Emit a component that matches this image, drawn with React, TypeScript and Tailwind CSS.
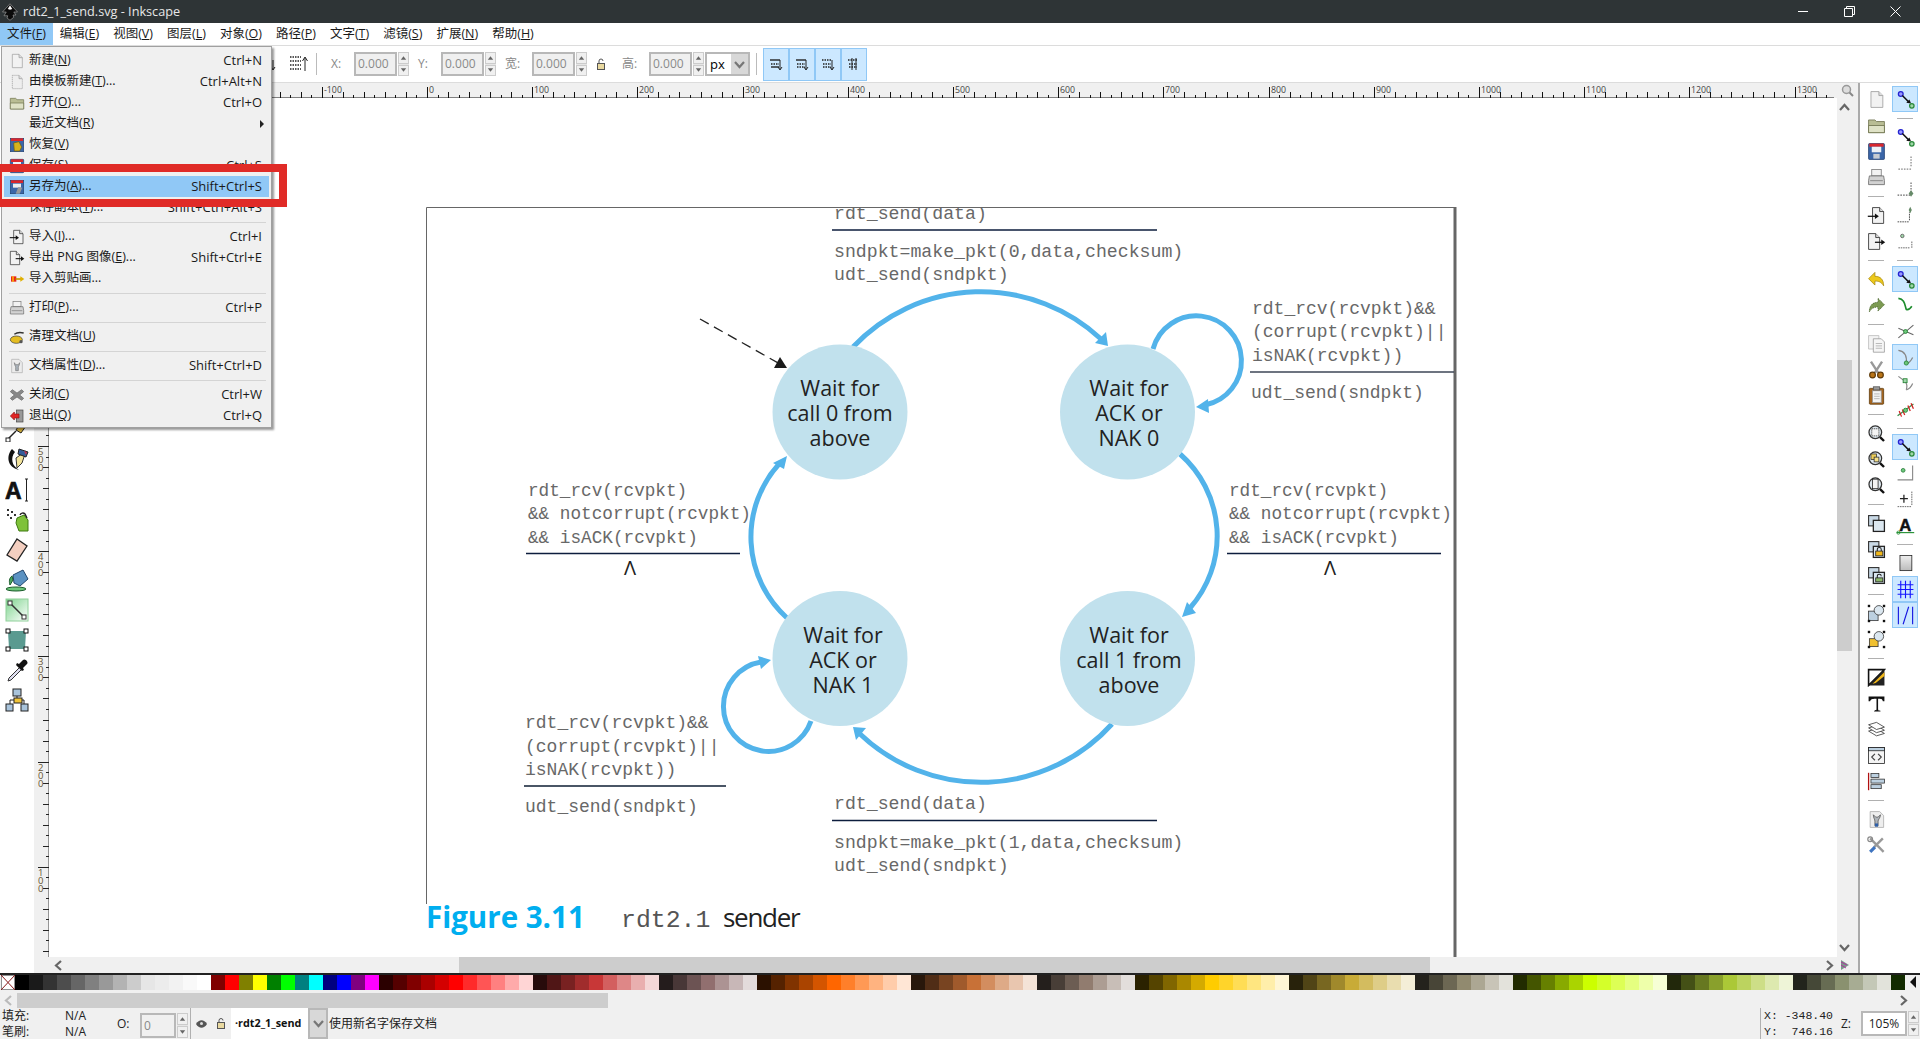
import React from "react";

const PALETTE = "#000000 #1a1a1a #333333 #4d4d4d #666666 #808080 #999999 #b3b3b3 #cccccc #e6e6e6 #ececec #f2f2f2 #f9f9f9 #ffffff #800000 #ff0000 #808000 #ffff00 #008000 #00ff00 #008080 #00ffff #000080 #0000ff #800080 #ff00ff #2b0000 #550000 #800000 #aa0000 #d40000 #ff0000 #ff2a2a #ff5555 #ff8080 #ffaaaa #ffd5d5 #280b0b #501616 #782121 #a02c2c #c83737 #d35f5f #de8787 #e9afaf #f4d7d7 #241c1c #483737 #6c5353 #916f6f #ac9393 #c8b7b7 #e3dbdb #2b1100 #552200 #803300 #aa4400 #d45500 #ff6600 #ff7f2a #ff9955 #ffb380 #ffccaa #ffe6d5 #28170b #502d16 #784421 #a05a2c #c87137 #d38d5f #deaa87 #e9c6af #f4e3d7 #241f1c #483e37 #6c5d53 #917c6f #ac9d93 #c8beb7 #e3dedb #2b2200 #554400 #806600 #aa8800 #d4aa00 #ffcc00 #ffd42a #ffdd55 #ffe680 #ffeeaa #fff6d5 #28220b #504416 #786721 #a0892c #c8ab37 #d3bc5f #decd87 #e9ddaf #f4eed7 #24221c #484537 #6c6753 #918a6f #aca793 #c8c4b7 #e3e2db #222b00 #445500 #668000 #88aa00 #aad400 #ccff00 #d4ff2a #ddff55 #e5ff80 #eeffaa #f6ffd5 #22280b #445016 #677821 #89a02c #abc837 #bcd35f #cdde87 #dde9af #eef4d7 #22241c #454837 #676c53 #8a916f #a7ac93 #c4c8b7 #e2e3db #122b00".split(" ");

const mag = (inner: React.ReactNode) => (
  <>
    <circle cx="10.5" cy="10.5" r="8" fill="#dfe8ef" stroke="#333" strokeWidth="1.6" />
    {inner}
    <path d="M16.5 16.5l5 5" stroke="#111" strokeWidth="3" />
  </>
);
const nodes = (
  <>
    <circle cx="6" cy="5" r="3" fill="#9a9aff" stroke="#2323d0" strokeWidth="1.6" />
    <path d="M8 7l8 8" stroke="#111" strokeWidth="1.8" />
    <path d="M19 17l-6-1 4-4z" fill="#111" />
    <circle cx="20" cy="20" r="2.8" fill="#9fd6a8" stroke="#2a8a3a" strokeWidth="1.6" />
  </>
);
const stack = (inner: React.ReactNode) => (
  <>
    <rect x="2" y="2" width="13" height="13" fill="#c9d9e6" stroke="#333" strokeWidth="1.4" />
    <rect x="8" y="8" width="14" height="14" fill="#dbe7f0" stroke="#222" strokeWidth="1.6" />
    {inner}
  </>
);

const ICONS: Record<string, React.ReactNode> = {
  page: (<><path d="M5 2h10l5 5v15H5z" fill="#f2f2f2" stroke="#999" /><path d="M15 2v5h5" fill="#ddd" stroke="#999" /></>),
  template: (<><path d="M5 2h10l5 5v15H5z" fill="#eee" stroke="#999" strokeDasharray="2 1" /><path d="M15 2v5h5" fill="#ddd" stroke="#999" /></>),
  open: (<><path d="M2 5h8l2 2h10v14H2z" fill="#b9bd94" stroke="#6b6f4a" /><path d="M2 12h20v9H2z" fill="#dfe2c6" stroke="#6b6f4a" /></>),
  save: (<><rect x="2" y="2" width="20" height="20" rx="1" fill="#3b66a8" stroke="#223f70" /><rect x="3" y="2" width="18" height="4" fill="#d9262c" /><rect x="6" y="6" width="12" height="7" fill="#eef2f6" /><rect x="8" y="15" width="8" height="6" fill="#c7ccd2" /></>),
  saveas: (<><rect x="2" y="2" width="20" height="20" fill="#3b66a8" stroke="#223f70" /><rect x="3" y="2" width="18" height="4" fill="#d9262c" /><rect x="6" y="7" width="12" height="6" fill="#eee" /><path d="M10 22l4-10 6 1-4 9z" fill="#999" /></>),
  recover: (<><rect x="2" y="2" width="20" height="20" fill="#3b66a8" stroke="#223f70" /><rect x="3" y="2" width="18" height="4" fill="#d9262c" /><path d="M7 9l8-2 4 8-3 6H8z" fill="#d6b21c" stroke="#6a5a10" /></>),
  print: (<><rect x="6" y="2" width="12" height="8" fill="#f2f2f2" stroke="#777" /><path d="M3 10h18l1 6v5H2v-5z" fill="#d2d2d2" stroke="#666" /><path d="M4 16h16" stroke="#777" /></>),
  importI: (<><path d="M7 2h9l5 5v15H7z" fill="#f2f2f2" stroke="#222" /><path d="M16 2v5h5" fill="#ddd" stroke="#222" /><path d="M1 13h11" stroke="#111" strokeWidth="1.6" /><path d="M15 13l-5-3.5v7z" fill="#111" /></>),
  exportI: (<><path d="M2 2h9l5 5v15H2z" fill="#f2f2f2" stroke="#222" /><path d="M11 2v5h5" fill="#ddd" stroke="#222" /><path d="M10 13h9" stroke="#111" strokeWidth="1.6" /><path d="M23 13l-5-3.5v7z" fill="#111" /></>),
  clip: (<><path d="M3 8h8v8H3z" fill="#e9241c" /><path d="M6 8v8" stroke="#ffd000" strokeWidth="2" /><path d="M10 12h9" stroke="#c79a00" strokeWidth="2.5" /><path d="M23 12l-6-4v8z" fill="#e0b000" /></>),
  vacuum: (<><ellipse cx="11" cy="16" rx="9" ry="5.5" fill="#e5bd21" stroke="#333" /><path d="M8 8c5-4 10-3 14-2" stroke="#333" strokeWidth="2" fill="none" /><circle cx="18" cy="19" r="2.5" fill="#555" /></>),
  docprop: (<><path d="M4 2h11l5 5v15H4z" fill="#ececec" stroke="#aaa" /><path d="M8 7c0 4 2 5 2 7v5h4v-5c0-2 2-3 2-7l-2 3h-4z" fill="#a9b2ba" stroke="#777" /></>),
  close: (<path d="M5 4l7 5 7-5 3 3-6 5 6 5-3 3-7-5-7 5-3-3 6-5-6-5z" fill="#888" stroke="#666" />),
  quit: (<><rect x="11" y="3" width="10" height="18" fill="#999" stroke="#444" /><path d="M2 12l6-6v3h7v6H8v3z" fill="#e02424" stroke="#901010" /></>),
  undo: (<path d="M10 3L2 11l8 8v-5c5 0 8 1 11 6 0-8-4-12-11-12z" fill="#edc91b" stroke="#a98a10" />),
  redo: (<path d="M14 3l8 8-8 8v-5c-5 0-8 1-11 6 0-8 4-12 11-12z" fill="#7c9a52" stroke="#3e5b22" strokeDasharray="1.5 1" />),
  copy: (<><path d="M2 2h13v17H2z" fill="#f3f3f3" stroke="#bbb" /><path d="M8 6h10l4 4v13H8z" fill="#f6f6f6" stroke="#999" /><path d="M11 12h8M11 15h8M11 18h8" stroke="#aaa" /></>),
  cut: (<><path d="M5 2l9 14M19 2L10 16" stroke="#999" strokeWidth="3" /><circle cx="7" cy="19" r="3.6" fill="#b97417" stroke="#5e3a0a" strokeWidth="1.5" /><circle cx="17" cy="19" r="3.6" fill="#b97417" stroke="#5e3a0a" strokeWidth="1.5" /></>),
  paste: (<><rect x="3" y="3" width="18" height="20" rx="1" fill="#a5651f" stroke="#5e3a0a" /><rect x="7" y="6" width="11" height="15" fill="#f4f4f4" stroke="#999" /><rect x="8" y="1" width="8" height="4" fill="#999" stroke="#555" /><path d="M9 10h7M9 13h7M9 16h7" stroke="#aaa" /></>),
  zoomsel: mag(<rect x="6" y="6" width="9" height="9" fill="#f4f4f4" stroke="#222" strokeDasharray="1.5 1" />),
  zoomdraw: mag(<><rect x="5" y="5" width="7" height="7" fill="#eccd57" stroke="#333" /><rect x="9" y="9" width="6" height="6" fill="#f5e08a" stroke="#333" /></>),
  zoompage: mag(<rect x="7" y="4" width="7" height="12" fill="#f4f4f4" stroke="#222" />),
  dup: stack(null),
  clone: stack(<><rect x="11" y="14" width="9" height="6" fill="#f0b71a" stroke="#222" /><path d="M13 14v-2a2.5 2.5 0 015 0v2" fill="none" stroke="#222" strokeWidth="1.3" /></>),
  unlink: stack(<><rect x="11" y="15" width="9" height="5" fill="#8db86a" stroke="#222" /><path d="M13 15v-2a2.5 2.5 0 015 0" fill="none" stroke="#222" strokeWidth="1.3" /></>),
  group: (<><rect x="2" y="9" width="12" height="12" fill="#bcd0e0" stroke="#333" /><circle cx="15" cy="8" r="6" fill="#dbe7f0" stroke="#333" /><g fill="#111"><rect x="1" y="1" width="3" height="3" /><rect x="20" y="1" width="3" height="3" /><rect x="1" y="20" width="3" height="3" /><rect x="20" y="20" width="3" height="3" /></g></>),
  ungroup: (<><rect x="3" y="11" width="11" height="10" fill="#f0c030" stroke="#333" /><circle cx="15" cy="8" r="6" fill="#dbe7f0" stroke="#333" /><g fill="#111"><rect x="1" y="1" width="3" height="3" /><rect x="20" y="1" width="3" height="3" /><rect x="1" y="20" width="3" height="3" /><rect x="20" y="20" width="3" height="3" /></g></>),
  fill: (<><path d="M2 2h20L2 22z" fill="#fff" stroke="#111" strokeWidth="2" /><path d="M22 2v20H2z" fill="#222" /><path d="M22 5L10 17l-3 3 4-1 11-9z" fill="#f0b71a" /></>),
  textT: (<path d="M2 3h20v6h-2c-1-3-2-3-6-3v13c0 2 1 2 3 2v1H9v-1c2 0 3 0 3-2V6C8 6 5 6 4 9H2z" fill="#111" />),
  layers: (<><path d="M2 14l10 6 10-3-10-6z" fill="#fff" stroke="#333" /><path d="M2 10l10 6 10-3-10-6z" fill="#fff" stroke="#333" /><path d="M2 6l10 6 10-3-10-6z" fill="#fff" stroke="#333" /></>),
  xml: (<><rect x="2" y="2" width="20" height="20" fill="#f4f4f4" stroke="#222" /><rect x="2" y="2" width="20" height="4" fill="#bcd0e0" stroke="#222" /><path d="M10 10l-4 4 4 4M14 10l4 4-4 4" stroke="#444" fill="none" strokeWidth="1.5" /></>),
  align: (<><path d="M2 1v22" stroke="#b01010" strokeWidth="1.6" /><rect x="5" y="2" width="10" height="5" fill="#bcd0e0" stroke="#333" /><rect x="5" y="9" width="17" height="5" fill="#bcd0e0" stroke="#333" /><rect x="5" y="16" width="13" height="5" fill="#bcd0e0" stroke="#333" /></>),
  docfile: (<><path d="M4 2h12l5 5v15H4z" fill="#eee" stroke="#aaa" /><path d="M8 6c0 4 2 6 2 8v6h4v-6c0-2 3-4 3-8l-3 3h-3z" fill="#aeb4ba" stroke="#555" /><rect x="10" y="17" width="4" height="4" fill="#2e5fa8" /></>),
  prefs: (<><path d="M4 3l17 17" stroke="#999" strokeWidth="3" /><path d="M20 3L9 14" stroke="#999" strokeWidth="3" /><path d="M10 14l-6 6" stroke="#3e74c0" strokeWidth="4" /><circle cx="4" cy="4" r="3" fill="none" stroke="#888" strokeWidth="1.5" /></>),
  snapDots: (<path d="M3 19h16M19 3v14" stroke="#888" strokeWidth="1.6" strokeDasharray="2 1.5" fill="none" />),
  snapDia: (<><path d="M2 19h16M19 3v13" stroke="#666" strokeWidth="1.5" strokeDasharray="2 1.5" fill="none" /><path d="M19 13l3 4-3 4-3-4z" fill="#668a68" /></>),
  snapDia2: (<><path d="M2 20h15" stroke="#222" strokeDasharray="2 1" fill="none" /><path d="M17 18V8" stroke="#222" strokeDasharray="2 1" /><path d="M18 1l2 4-2 4-2-4z" fill="#668a68" /></>),
  snapBox: (<><circle cx="8" cy="5" r="2.2" fill="#9fd6a8" stroke="#555" /><path d="M3 20h14M20 12v8" stroke="#444" strokeDasharray="2 1" /></>),
  snapCurve: (<><path d="M3 3c8 1 8 8 10 14 3 1 5-1 7-4" stroke="#1c8c2c" strokeWidth="2" fill="none" /></>),
  snapCross: (<><path d="M3 20L22 4" stroke="#666" strokeWidth="1.4" /><path d="M3 8l19 8" stroke="#666" strokeWidth="1.4" /><circle cx="12" cy="12" r="2.5" fill="#6cc77a" stroke="#1c7c2c" /></>),
  snapCusp: (<><path d="M3 3c8 1 11 8 10 17" stroke="#888" strokeWidth="1.6" fill="none" /><path d="M13 20c4-1 6-4 8-8" stroke="#888" strokeWidth="1.6" fill="none" /><circle cx="13" cy="19" r="2.6" fill="#6cc77a" stroke="#1c7c2c" /></>),
  snapCorner: (<><path d="M3 3l8 6c4 4 3 8 2 11M13 20c4-1 6-3 8-8" stroke="#888" strokeWidth="1.5" fill="none" /><rect x="9" y="6" width="5" height="5" fill="#9fd6a8" stroke="#1c7c2c" /></>),
  snapHatch: (<><path d="M2 20L22 5" stroke="#3c8f4c" strokeWidth="1.6" /><path d="M4 14l3 7M8 12l3 7M15 7l3 7M19 4l3 7" stroke="#d42222" strokeWidth="1.6" /><circle cx="12" cy="13" r="2.6" fill="#6cc77a" stroke="#1c7c2c" /></>),
  snapBBox: (<><circle cx="9" cy="8" r="2.4" fill="#6cc77a" stroke="#2a7a3a" /><path d="M2 20h19V2" stroke="#888" fill="none" strokeWidth="1.4" /></>),
  snapPlus: (<><path d="M10 6v10M5 11h10" stroke="#222" strokeWidth="1.6" /><path d="M20 2v18M2 21h18" stroke="#444" strokeDasharray="2 1" fill="none" /></>),
  snapA: (<><text x="4" y="19" fontSize="21" fontWeight="900" fontFamily="Liberation Sans, sans-serif" fill="#111" stroke="#111" strokeWidth="0.6">A</text><path d="M1 21h22" stroke="#1c8c2c" strokeWidth="1.4" /><circle cx="3" cy="21" r="2" fill="none" stroke="#1c8c2c" /></>),
  snapPage: (<><defs><linearGradient id="pg" x1="0" y1="0" x2="0" y2="1"><stop offset="0" stopColor="#eee" /><stop offset="1" stopColor="#bbb" /></linearGradient></defs><rect x="5" y="2" width="15" height="19" fill="url(#pg)" stroke="#222" /></>),
  snapGrid: (<path d="M2 6h20M2 12h20M2 18h20M6 1v22M12 1v22M18 1v22" stroke="#1414ff" strokeWidth="1.4" />),
  snapGuide: (<path d="M3 1v22M21 1v22M9 23L16 1" stroke="#1414e0" strokeWidth="1.4" fill="none" />),
  pen: (<><path d="M18 1l5 4-7 10-5-3z" fill="#d8b23a" stroke="#222" /><path d="M3 21l8-8" stroke="#222" strokeWidth="1.4" /><rect x="1" y="20" width="4" height="4" fill="#fff" stroke="#222" /></>),
  callig: (<><path d="M7 1C1 8 2 19 14 22c-7-4-9-12-4-18z" fill="#111" /><path d="M21 3l-4 12-5 5-1-10z" fill="#f2e39a" stroke="#333" /><path d="M14 1l9 3-2 5-8-3z" fill="#355e99" stroke="#222" /><path d="M19 3l3 1-1 3z" fill="#c8304c" /></>),
  A: (<><text x="0" y="21" fontSize="23" fontWeight="900" fontFamily="Liberation Sans, sans-serif" fill="#111" stroke="#111" strokeWidth="0.7">A</text><path d="M20 1h3M21.500 1v22M20 23h3" stroke="#222" /></>),
  spray: (<><path d="M12 10l7-3 4 5v11l-9 0-3-8z" fill="#7fc23a" stroke="#3e7a10" /><path d="M15 7a3 3 0 015-1l2 4" fill="none" stroke="#222" strokeWidth="1.4" /><g fill="#333"><rect x="2" y="1" width="2" height="2" /><rect x="6" y="3" width="2" height="2" /><rect x="2" y="6" width="2" height="2" /><rect x="9" y="6" width="2" height="2" /><rect x="5" y="9" width="2" height="2" /></g></>),
  eraser: (<path d="M12 1l10 7-10 15-10-6z" fill="#f4cfc0" stroke="#222" strokeWidth="1.3" />),
  bucket: (<><path d="M8 7l10-5 5 9-8 7-6-3z" fill="#5b92c2" stroke="#22466c" /><path d="M7 8c-3 2-3 6-2 9l3-5z" fill="#49a55e" stroke="#1c5c2c" /><ellipse cx="11" cy="21" rx="10" ry="2" fill="#6cc77a" stroke="#1c5c2c" /></>),
  grad: (<><defs><linearGradient id="gr" x1="0" y1="0" x2="1" y2="1"><stop offset="0" stopColor="#7ed48e" /><stop offset="1" stopColor="#fff" /></linearGradient></defs><rect x="1" y="1" width="22" height="22" fill="url(#gr)" stroke="#8fd09a" /><path d="M5 5l14 14" stroke="#333" strokeWidth="1.5" /><rect x="3" y="3" width="4" height="4" fill="#fff" stroke="#333" /><rect x="17" y="17" width="4" height="4" fill="#fff" stroke="#333" /></>),
  mesh: (<><path d="M3 3l18 0-1 18-16 0z" fill="#5a9a90" /><g fill="#fff" stroke="#111"><rect x="1" y="1" width="4" height="4" /><rect x="19" y="1" width="4" height="4" /><rect x="1" y="19" width="4" height="4" /><rect x="19" y="19" width="4" height="4" /></g></>),
  dropper: (<><path d="M15 9l-11 11-1 3 3-1 11-11" fill="#dde" stroke="#333" /><path d="M14 6l4-4c2-2 6 2 4 4l-4 4 1 2-2 1-6-6 1-2z" fill="#111" /></>),
  connector: (<><rect x="8" y="1" width="8" height="7" fill="#a9c4dc" stroke="#222" /><rect x="1" y="16" width="7" height="7" fill="#a9c4dc" stroke="#222" /><rect x="16" y="16" width="7" height="7" fill="#a9c4dc" stroke="#222" /><path d="M12 8v4M5 16v-4h14v4" stroke="#222" fill="none" /><rect x="9" y="10" width="8" height="5" fill="#f0c43a" stroke="#222" /></>),
  nodes,
};

function Icon({ n, s = 24 }: { n: string; s?: number }) {
  return (
    <svg width={s} height={s} viewBox="0 0 24 24" className="shrink-0" fill="none">
      {ICONS[n]}
    </svg>
  );
}

function Mnemonic({ text }: { text: string }) {
  const m = text.match(/^(.*\()(.)(\).*)$/);
  if (!m) return <>{text}</>;
  return (
    <>
      {m[1]}
      <u>{m[2]}</u>
      {m[3]}
    </>
  );
}

function Spin() {
  return (
    <div className="flex flex-col w-[11px] h-full gap-[1px] bg-[#e6e6e6]">
      {["M2 6l3-4 3 4z", "M2 2l3 4 3-4z"].map((d) => (
        <div key={d} className="flex-1 flex items-center justify-center bg-[#f0f0f0] border border-[#ccc]">
          <svg width="10" height="8" viewBox="0 0 10 8">
            <path d={d} fill="#666" />
          </svg>
        </div>
      ))}
    </div>
  );
}

function NumField({ label, lw, value = "0.000" }: { label: string; lw: number; value?: string }) {
  return (
    <div className="flex items-center h-[24px]">
      <span className="text-[12px] text-[#888]" style={{ width: lw }}>{label}</span>
      <div className="w-[43px] h-full bg-[#f0f0f0] border-2 border-[#b8b8b8] text-[12px] text-[#8a8a8a] flex items-center pl-[2px] leading-none">{value}</div>
      <div className="h-full ml-[1px]"><Spin /></div>
    </div>
  );
}

function Chev({ d, c = "#666" }: { d: "l" | "r" | "u" | "d"; c?: string }) {
  const p = { l: "M8 1L3 5.500l5 4.500", r: "M3 1l5 4.500-5 4.500", u: "M1 8l4.500-5 4.500 5", d: "M1 3l4.500 5 4.500-5" }[d];
  return (
    <svg width="11" height="11" viewBox="0 0 11 11" className="shrink-0">
      <path d={p} stroke={c} strokeWidth="2.2" fill="none" />
    </svg>
  );
}

function AlignGlyph({ k }: { k: number }) {
  return (
    <svg width="16" height="14" viewBox="0 0 16 14">
      <path d="M2 3h10" stroke="#222" strokeWidth="1.4" strokeDasharray={k >= 3 ? "1.500 1" : undefined} />
      <path d="M3 7h8" stroke="#222" strokeWidth="1.4" strokeDasharray="1.500 1" />
      <path d="M3 10h8" stroke="#222" strokeWidth="1.4" strokeDasharray={k === 1 ? undefined : "1.500 1"} />
      <path d={k === 4 ? "M6 1v12M10 1v12" : "M12 3v9M10 10l2 3 2-3"} stroke="#222" fill="none" />
    </svg>
  );
}

function HRuler() {
  const ticks: React.ReactNode[] = [];
  const W = 1800;
  const ox = 427 - 34;
  for (let i = -38; i <= 140; i++) {
    const x = Math.round(ox + i * 10.52);
    if (x < 0 || x > W) continue;
    const h = i % 10 === 0 ? 11 : i % 2 === 0 ? 6 : 3;
    ticks.push(<path key={i} d={`M${x + 0.5} 15V${15 - h}`} stroke="#111" />);
    if (i % 10 === 0 && x + 34 > 272)
      ticks.push(
        <text key={`t${i}`} x={x + 2} y={10} fontSize="8.800" fill="#444" fontFamily="Open Sans, sans-serif">
          {i * 10}
        </text>
      );
  }
  return (
    <svg width={W} height={16} viewBox={`0 0 ${W} 16`} className="block">
      <path d="M0 15.200H1800" stroke="#111" strokeWidth="1.500" />
      {ticks}
    </svg>
  );
}

function VRuler() {
  const ticks: React.ReactNode[] = [];
  const H = 859;
  const oy = 972 - 98;
  for (let i = -2; i <= 90; i++) {
    const y = Math.round(oy - i * 10.52);
    if (y < 0 || y > H) continue;
    const w = i % 10 === 0 ? 11 : i % 2 === 0 ? 6 : 3;
    ticks.push(<path key={i} d={`M15 ${y + 0.5}H${15 - w}`} stroke="#222" />);
    if (i % 10 === 0 && i > 0 && y + 98 > 430)
      String(i * 10).split("").forEach((ch, j) =>
        ticks.push(
          <text key={`t${i}-${j}`} x={4} y={y + 9 + j * 8} fontSize="9.500" fill="#665533" fontFamily="Open Sans, sans-serif">
            {ch}
          </text>
        )
      );
  }
  return (
    <svg width={16} height={H} viewBox={`0 0 16 ${H}`} className="block">
      <path d="M15.300 0V859" stroke="#111" strokeWidth="1.400" />
      {ticks}
    </svg>
  );
}

const MONO = "Liberation Mono, monospace";
const SANS = "Open Sans, sans-serif";

function Mono({ x, y, s = 18, children }: { x: number; y: number; s?: number; children: string }) {
  return (
    <text x={x} y={y} fontSize={s} fontFamily={MONO} fill="#686868" xmlSpace="preserve">
      {children}
    </text>
  );
}

function Rule({ x1, x2, y, c = "#0d1d3d", w = 1.5 }: { x1: number; x2: number; y: number; c?: string; w?: number }) {
  return <path d={`M${x1} ${y}H${x2}`} stroke={c} strokeWidth={w} />;
}

function State({ cx, cy, tx, lines }: { cx: number; cy: number; tx: number; lines: string[] }) {
  return (
    <g>
      <circle cx={cx} cy={cy} r="67.500" fill="#c1e1ed" />
      {lines.map((l, i) => (
        <text key={l} x={tx} y={cy - 16 + i * 25} textAnchor="middle" fontSize="21.500" fontFamily={SANS} fill="#222">
          {l}
        </text>
      ))}
    </g>
  );
}

function Figure() {
  const blue = "#52b3ea";
  return (
    <svg width="1788" height="859" viewBox="49 98 1788 859" className="absolute left-0 top-0">
      <Mono x={834} y={219} s={18.2}>rdt_send(data)</Mono>
      <rect x="420" y="190" width="1040" height="17" fill="#fff" />
      <path d="M426.500 904V207.500H1454" stroke="#666" fill="none" />
      <path d="M1455 207V957" stroke="#666" strokeWidth="3" />

      <Rule x1={832} x2={1157} y={230} />
      <Mono x={834} y={257} s={18.2}>sndpkt=make_pkt(0,data,checksum)</Mono>
      <Mono x={834} y={280} s={18.2}>udt_send(sndpkt)</Mono>

      <g stroke={blue} strokeWidth="5" fill="none">
        <path d="M853 347A176 176 0 0 1 1101 339" />
        <path d="M1153 349A45 45 0 1 1 1205 405" />
        <path d="M1180 454A109 109 0 0 1 1190 608" />
        <path d="M1112 724A176 176 0 0 1 860 734" />
        <path d="M787 618A109 109 0 0 1 779 464" />
        <path d="M811 721A45 45 0 1 1 761 662" />
      </g>
      <g fill={blue}>
        <polygon points="1108,346 1095,343 1106,332" />
        <polygon points="1196,407 1208,399 1209,413" />
        <polygon points="1182,617 1187,602 1196,613" />
        <polygon points="853,727 866,728 856,740" />
        <polygon points="787,456 773,463 784,469" />
        <polygon points="771,660 758,656 761,669" />
      </g>

      <path d="M700 319L780 364" stroke="#222" strokeWidth="1.300" strokeDasharray="10 6" />
      <polygon points="787,368 774,368 780,357" fill="#1a1a1a" />

      <State cx={840} cy={412} tx={840} lines={["Wait for", "call 0 from", "above"]} />
      <State cx={1127.5} cy={412} tx={1129} lines={["Wait for", "ACK or", "NAK 0"]} />
      <State cx={840} cy={658.5} tx={843} lines={["Wait for", "ACK or", "NAK 1"]} />
      <State cx={1127.5} cy={658.5} tx={1129} lines={["Wait for", "call 1 from", "above"]} />

      <Mono x={1252} y={314}>rdt_rcv(rcvpkt)&&</Mono>
      <Mono x={1252} y={337}>(corrupt(rcvpkt)||</Mono>
      <Mono x={1252} y={361}>isNAK(rcvpkt))</Mono>
      <Rule x1={1250} x2={1454} y={372} c="#3c4656" />
      <Mono x={1251} y={398}>udt_send(sndpkt)</Mono>

      <Mono x={528} y={496} s={17.7}>rdt_rcv(rcvpkt)</Mono>
      <Mono x={528} y={519} s={17.7}>&& notcorrupt(rcvpkt)</Mono>
      <Mono x={528} y={543} s={17.7}>&& isACK(rcvpkt)</Mono>
      <Rule x1={526} x2={740} y={553.500} />
      <text x={630} y={575} textAnchor="middle" fontSize="20" fontFamily={SANS} fill="#222">Λ</text>

      <Mono x={1229} y={496} s={17.7}>rdt_rcv(rcvpkt)</Mono>
      <Mono x={1229} y={519} s={17.7}>&& notcorrupt(rcvpkt)</Mono>
      <Mono x={1229} y={543} s={17.7}>&& isACK(rcvpkt)</Mono>
      <Rule x1={1227} x2={1441} y={553.500} />
      <text x={1330} y={575} textAnchor="middle" fontSize="20" fontFamily={SANS} fill="#222">Λ</text>

      <Mono x={525} y={728}>rdt_rcv(rcvpkt)&&</Mono>
      <Mono x={525} y={752}>(corrupt(rcvpkt)||</Mono>
      <Mono x={525} y={775}>isNAK(rcvpkt))</Mono>
      <Rule x1={524} x2={726} y={786} c="#4a5666" w={2} />
      <Mono x={525} y={812}>udt_send(sndpkt)</Mono>

      <Mono x={834} y={809} s={18.2}>rdt_send(data)</Mono>
      <Rule x1={832} x2={1157} y={820.500} />
      <Mono x={834} y={848} s={18.2}>sndpkt=make_pkt(1,data,checksum)</Mono>
      <Mono x={834} y={871} s={18.2}>udt_send(sndpkt)</Mono>

      <text x={426} y={928} fontSize="29.500" fontWeight="700" fontFamily={SANS} fill="#00aeef">Figure 3.11</text>
      <text x={621} y={927} fontSize="24.800" fontFamily={MONO} fill="#555">rdt2.1</text>
      <text x={723} y={927} fontSize="26" letterSpacing="-1.300" fontFamily={SANS} fill="#222">sender</text>
    </svg>
  );
}

type MI = { t?: string; k?: string; i?: string; sub?: boolean; hl?: boolean; sep?: boolean };
const MENU: MI[] = [
  { t: "新建(N)", k: "Ctrl+N", i: "page" },
  { t: "由模板新建(T)...", k: "Ctrl+Alt+N", i: "template" },
  { t: "打开(O)...", k: "Ctrl+O", i: "open" },
  { t: "最近文档(R)", sub: true },
  { t: "恢复(V)", i: "recover" },
  { t: "保存(S)", k: "Ctrl+S", i: "save" },
  { t: "另存为(A)...", k: "Shift+Ctrl+S", i: "saveas", hl: true },
  { t: "保存副本(Y)...", k: "Shift+Ctrl+Alt+S" },
  { sep: true },
  { t: "导入(I)...", k: "Ctrl+I", i: "importI" },
  { t: "导出 PNG 图像(E)...", k: "Shift+Ctrl+E", i: "exportI" },
  { t: "导入剪贴画...", i: "clip" },
  { sep: true },
  { t: "打印(P)...", k: "Ctrl+P", i: "print" },
  { sep: true },
  { t: "清理文档(U)", i: "vacuum" },
  { sep: true },
  { t: "文档属性(D)...", k: "Shift+Ctrl+D", i: "docprop" },
  { sep: true },
  { t: "关闭(C)", k: "Ctrl+W", i: "close" },
  { t: "退出(Q)", k: "Ctrl+Q", i: "quit" },
];

function FileMenu() {
  return (
    <div className="absolute left-[1px] top-[46px] w-[271px] h-[382px] bg-[#f0f0f0] border border-[#a0a0a0] shadow-[2px_2px_2px_rgba(0,0,0,0.4)] pt-[3px] px-[2px]">
      {MENU.map((m, idx) =>
        m.sep ? (
          <div key={idx} className="h-[8px] flex items-center pl-[5px] pr-[3px]">
            <div className="w-full h-[1px] bg-[#d4d4d4]" />
          </div>
        ) : (
          <div key={idx} className={`h-[21px] flex items-center pl-[5px] pr-[7px] text-[12.500px] text-[#1a1a1a] ${m.hl ? "bg-[#90c8f6]" : ""}`}>
            <div className="w-[20px] flex items-center shrink-0">{m.i && <Icon n={m.i} s={16} />}</div>
            <span className="flex-1 whitespace-pre"><Mnemonic text={m.t!} /></span>
            {m.k && <span className="text-[13px]">{m.k}</span>}
            {m.sub && <svg width="6" height="8" viewBox="0 0 6 8" className="mr-[-3px]"><path d="M1 0l4 4-4 4z" fill="#222" /></svg>}
          </div>
        )
      )}
    </div>
  );
}

const CMD = ["page", "open", "save", "print", "-", "importI", "exportI", "-", "undo", "redo", "-", "copy", "cut", "paste", "-", "zoomsel", "zoomdraw", "zoompage", "-", "dup", "clone", "unlink", "-", "group", "ungroup", "-", "fill", "textT", "layers", "xml", "align", "-", "docfile", "prefs"];
const SNAP: [string, boolean?][] = [["nodes", true], ["-"], ["nodes"], ["snapDots"], ["snapDia"], ["snapDia2"], ["snapBox"], ["-"], ["nodes", true], ["snapCurve"], ["snapCross"], ["snapCusp", true], ["snapCorner"], ["snapHatch"], ["-"], ["nodes", true], ["snapBBox"], ["snapPlus"], ["snapA"], ["-"], ["snapPage"], ["snapGrid", true], ["snapGuide", true]];
const TOOLS = ["pen", "callig", "A", "spray", "eraser", "bucket", "grad", "mesh", "dropper", "connector"];
const TOP = ["文件(F)", "编辑(E)", "视图(V)", "图层(L)", "对象(O)", "路径(P)", "文字(T)", "滤镜(S)", "扩展(N)", "帮助(H)"];

export default function App() {
  return (
    <div className="relative w-[1920px] h-[1039px] overflow-hidden bg-white flex flex-col font-['Open_Sans','Noto_Sans_CJK_SC',sans-serif]">
      {/* title bar */}
      <div className="h-[23px] bg-[#2e3436] flex items-center shrink-0 text-[#e8e8e8] text-[12.700px]">
        <svg width="18" height="18" viewBox="0 0 24 24" className="ml-[1px] mr-[4px]">
          <path d="M12 1l10 11h-5l3 4h-4l1 3-5 4-4-3 1-3H4l3-5H2z" fill="#0b0b0b" stroke="#aaa" strokeWidth="0.800" />
          <path d="M12 3l3 5-3 1-3-1z" fill="#fff" />
        </svg>
        <span>rdt2_1_send.svg - Inkscape</span>
        <div className="ml-auto flex items-center">
          <div className="w-[46px] flex justify-center"><div className="w-[10px] h-[1px] bg-white" /></div>
          <div className="w-[46px] flex justify-center">
            <svg width="11" height="11" viewBox="0 0 11 11"><path d="M2.500 2.500V.5h8v8h-2M.5 2.500h8v8h-8z" stroke="#fff" fill="none" /></svg>
          </div>
          <div className="w-[46px] mr-[2px] flex justify-center">
            <svg width="11" height="11" viewBox="0 0 11 11"><path d="M.5.5l10 10M10.500.5l-10 10" stroke="#fff" /></svg>
          </div>
        </div>
      </div>
      {/* menu bar */}
      <div className="h-[23px] flex items-center shrink-0 text-[12.500px] text-[#1a1a1a] border-b border-[#dcdcdc]">
        {TOP.map((t, i) => (
          <div key={t} className={`h-full flex items-center justify-center px-[7px] pt-[1px] ${i === 0 ? "bg-[#90c8f6]" : ""}`}><span><Mnemonic text={t} /></span></div>
        ))}
      </div>
      {/* tool controls */}
      <div className="h-[37px] shrink-0 flex items-center pl-[261px] border-b border-[#dcdcdc]">
        <AlignGlyph k={3} />
        <div className="ml-[12px]">
          <svg width="20" height="18" viewBox="0 0 20 18"><path d="M1 2h11M1 6h11M1 10h11M1 14h11" stroke="#222" strokeWidth="1.400" strokeDasharray="1.500 1" /><path d="M16 16V3M13.500 6L16 2l2.500 4" stroke="#222" fill="none" /></svg>
        </div>
        <div className="w-[1px] h-[22px] bg-[#bbb] ml-[7px]" />
        <div className="ml-[14px] flex items-center">
          <NumField label="X:" lw={23} />
          <div className="ml-[9px]"><NumField label="Y:" lw={23} /></div>
          <div className="ml-[9px]"><NumField label="宽:" lw={27} /></div>
        </div>
        <svg width="12" height="12" viewBox="0 0 12 12" className="ml-[8px]"><rect x="2.500" y="5.500" width="7" height="6" fill="#e9d9a0" stroke="#555" /><path d="M4 5V3a2 2 0 014 0" fill="none" stroke="#555" /></svg>
        <div className="ml-[15px]"><NumField label="高:" lw={27} /></div>
        <div className="ml-[1px] w-[45px] h-[24px] flex border-2 border-[#b8b8b8]">
          <div className="flex-1 text-[13px] flex items-center pl-[3px] leading-none">px</div>
          <div className="w-[17px] bg-[#d8d8d8] flex items-center justify-center"><Chev d="d" c="#777" /></div>
        </div>
        <div className="w-[1px] h-[22px] bg-[#bbb] ml-[6px]" />
        <div className="ml-[6px] flex">
          {[1, 2, 3, 4].map((k) => (
            <div key={k} className="w-[26px] h-[33px] bg-[#cce8ff] border border-[#90c8f6] flex items-center justify-center">
              <AlignGlyph k={k} />
            </div>
          ))}
        </div>
      </div>
      {/* middle */}
      <div className="flex-1 min-h-0 flex">
        <div className="w-[34px] shrink-0 pt-[332px] flex flex-col items-center bg-white">
          {TOOLS.map((t) => (
            <div key={t} className="h-[30px] flex items-center justify-center"><Icon n={t} /></div>
          ))}
        </div>
        <div className="w-[1824px] shrink-0 flex flex-col min-w-0">
          <div className="h-[15px] shrink-0 flex bg-[#f0f0f0]">
            <div className="w-[1800px] shrink-0"><HRuler /></div>
            <div className="flex-1 flex justify-center items-start pl-[2px]">
              <svg width="13" height="13" viewBox="0 0 13 13" className="mt-[1px]"><circle cx="5.500" cy="5.500" r="4" fill="#ddd" stroke="#999" strokeWidth="1.500" /><path d="M8.500 8.500l3.500 3.500" stroke="#888" strokeWidth="2" /></svg>
            </div>
          </div>
          <div className="flex-1 min-h-0 flex">
            <div className="w-[15px] shrink-0 bg-[#f0f0f0] overflow-hidden"><VRuler /></div>
            <div className="flex-1 relative overflow-hidden bg-white"><Figure /></div>
            <div className="w-[15px] shrink-0 bg-[#f0f0f0] flex flex-col items-center">
              <div className="h-[19px] flex items-center"><Chev d="u" /></div>
              <div className="mt-[243px] h-[291px] w-full bg-[#cdcdcd]" />
              <div className="mt-auto h-[20px] flex items-center"><Chev d="d" /></div>
            </div>
            <div className="w-[6px] shrink-0 bg-[#f0f0f0]" />
          </div>
          <div className="h-[16px] shrink-0 bg-[#f0f0f0] flex items-center">
            <div className="w-[19px]" />
            <Chev d="l" />
            <div className="ml-[395px] w-[971px] h-full bg-[#cdcdcd]" />
            <div className="ml-auto flex items-center pr-[8px] gap-[5px]">
              <Chev d="r" />
              <svg width="10" height="12" viewBox="0 0 10 12"><path d="M1 1l8 5-8 5z" fill="#7a9a8a" /><path d="M1 3l6 3M1 6l5 3" stroke="#b030a0" /></svg>
            </div>
          </div>
        </div>
        <div className="w-[2px] shrink-0 bg-[#aaa]" />
        <div className="flex-1 flex pt-[3px] bg-white">
          <div className="w-[32px] shrink-0 flex flex-col items-center">
            {CMD.map((c, i) =>
              c === "-" ? (
                <div key={i} className="h-[12px] flex items-center"><div className="w-[16px] h-[1px] bg-[#b0b0b0]" /></div>
              ) : (
                <div key={i} className="h-[26px] flex items-center justify-center"><Icon n={c} s={19} /></div>
              )
            )}
          </div>
          <div className="w-[26px] shrink-0 flex flex-col items-center">
            {SNAP.map(([c, on], i) =>
              c === "-" ? (
                <div key={i} className="h-[12px] flex items-center"><div className="w-[16px] h-[1px] bg-[#b0b0b0]" /></div>
              ) : (
                <div key={i} className={`h-[26px] w-[26px] flex items-center justify-center ${on ? "bg-[#cce8ff] border border-[#90c8f6]" : ""}`}><Icon n={c} s={19} /></div>
              )
            )}
          </div>
        </div>
      </div>
      {/* palette */}
      <div className="h-[20px] shrink-0 border-t-2 border-[#222] bg-[#f0f0f0] flex items-start pl-[1px]">
        <div className="h-[15px] flex bg-white">
          <svg width="14" height="15" viewBox="0 0 14 15" className="shrink-0"><rect width="14" height="15" fill="#fff" stroke="#222" /><path d="M0 0l14 15M14 0L0 15" stroke="#8a1a1a" /></svg>
          {PALETTE.map((c, i) => (
            <div key={i} className="w-[14px] h-[15px]" style={{ backgroundColor: c }} />
          ))}
        </div>
        <svg width="8" height="12" viewBox="0 0 8 12" className="ml-auto mr-[3px] mt-[1px]"><path d="M7 0L1 6l6 6z" fill="#111" /></svg>
      </div>
      {/* palette scroll */}
      <div className="h-[15px] shrink-0 bg-[#f0f0f0] flex items-center">
        <div className="w-[17px] flex justify-center"><Chev d="l" c="#bbb" /></div>
        <div className="w-[591px] h-full bg-[#cdcdcd]" />
        <div className="ml-auto mr-[11px]"><Chev d="r" /></div>
      </div>
      {/* status */}
      <div className="h-[31px] shrink-0 bg-[#f0f0f0] flex items-stretch text-[12px] text-[#222]">
        <div className="w-[117px] pl-[2px] flex flex-col justify-center leading-[16px] pt-[1px]">
          <div className="flex"><span className="w-[63px]">填充:</span><span>N/A</span></div>
          <div className="flex"><span className="w-[63px]">笔刷:</span><span>N/A</span></div>
        </div>
        <div className="flex items-center">
          <span className="w-[23px]">O:</span>
          <div className="w-[36px] h-[25px] mt-[4px] bg-[#f0f0f0] border-2 border-[#b8b8b8] pl-[2px] text-[#888] flex items-center">0</div>
          <div className="h-[25px] mt-[4px] ml-[1px]"><Spin /></div>
        </div>
        <div className="w-[1px] ml-[2px] bg-[#b0b0b0]" />
        <div className="w-[40px] flex items-center justify-center gap-[9px]">
          <svg width="11" height="9" viewBox="0 0 11 9"><path d="M0 5c3-5 8-5 11 0-3 5-8 5-11 0z" fill="#555" /><circle cx="5.500" cy="4.500" r="1.500" fill="#ddd" /></svg>
          <svg width="10" height="11" viewBox="0 0 10 11"><rect x="1.500" y="4.500" width="7" height="6" fill="#e9d9a0" stroke="#555" /><path d="M3 4V2.500a2 2 0 014 0" fill="none" stroke="#555" /></svg>
        </div>
        <div className="w-[77px] bg-white text-[10.800px] font-bold flex items-center pl-[4px] text-[#111] whitespace-pre">·rdt2_1_send</div>
        <div className="w-[20px] bg-[#d8d8d8] border-2 border-[#b8b8b8] flex items-center justify-center"><Chev d="d" c="#777" /></div>
        <div className="ml-[1px] flex items-center">使用新名字保存文档</div>
        <div className="ml-auto w-[1px] bg-[#b0b0b0]" />
        <div className="w-[80px] pl-[3px] flex flex-col justify-center leading-[16px] text-[11.500px] font-['Liberation_Mono',monospace] whitespace-pre">
          <div>X: -348.40</div>
          <div>Y:  746.16</div>
        </div>
        <div className="flex items-center w-[20px]">Z:</div>
        <div className="w-[46px] h-[25px] my-auto bg-white border-2 border-[#b8b8b8] flex items-center justify-center leading-none">105%</div>
        <div className="h-[25px] my-auto ml-[1px] mr-[1px]"><Spin /></div>
      </div>
      <FileMenu />
      {/* callout over the menu */}
      <div className="absolute left-[-6px] top-[164px] w-[293px] h-[43px] border-[8px] border-[#e02b27] pointer-events-none" />
    </div>
  );
}
